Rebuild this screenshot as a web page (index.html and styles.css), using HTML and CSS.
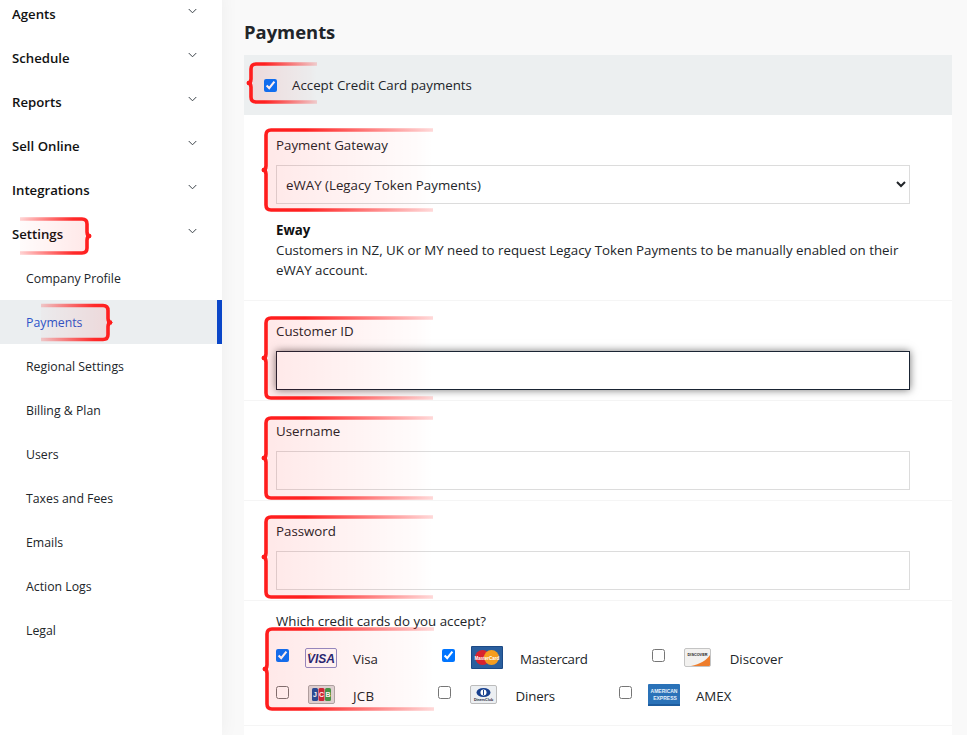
FILE: index.html
```html
<!DOCTYPE html>
<html lang="en">
<head>
<meta charset="utf-8">
<title>Payments</title>
<link rel="stylesheet" href="styles.css">
</head>
<body>
<svg class="defs" width="0" height="0" aria-hidden="true">
  <defs>
    <linearGradient id="sl"><stop offset="0" stop-color="#ff1c1c"/><stop offset=".25" stop-color="#ff2020"/><stop offset="1" stop-color="#ff2a2a" stop-opacity=".18"/></linearGradient>
    <linearGradient id="fl"><stop offset="0" stop-color="#ff0000" stop-opacity=".09"/><stop offset=".9" stop-color="#ff0000" stop-opacity=".015"/><stop offset="1" stop-color="#ff0000" stop-opacity="0"/></linearGradient>
    <linearGradient id="sr"><stop offset="0" stop-color="#ff2a2a" stop-opacity=".2"/><stop offset=".75" stop-color="#ff2a2a"/><stop offset="1" stop-color="#ff1c1c"/></linearGradient>
    <linearGradient id="fr"><stop offset="0" stop-color="#ff0000" stop-opacity=".015"/><stop offset="1" stop-color="#ff0000" stop-opacity=".09"/></linearGradient>
    <symbol id="chev" viewBox="0 0 10 6"><path d="M.8.8 5 5l4.200-4.200" fill="none" stroke="#3a4148" stroke-width="1.100"/></symbol>
    <symbol id="big" viewBox="0 0 172 84">
      <path d="M172 2H10Q5 2 5 7V42H5V77Q5 82 10 82H172Z" fill="url(#fl)"/>
      <path d="M172 2H10Q5 2 5 7V38Q5 42 1 42Q5 42 5 46V77Q5 82 10 82H172" fill="none" stroke="url(#sl)" stroke-width="3.600"/>
      <path d="M6 38 0 42l6 4z" fill="#ff1c1c"/>
    </symbol>
    <symbol id="small" viewBox="0 0 71 42">
      <path d="M71 2H10Q5 2 5 7V35Q5 40 10 40H71Z" fill="url(#fl)"/>
      <path d="M71 2H10Q5 2 5 7V17Q5 21 1 21Q5 21 5 25V35Q5 40 10 40H71" fill="none" stroke="url(#sl)" stroke-width="3.600"/>
      <path d="M6 17 0 21l6 4z" fill="#ff1c1c"/>
    </symbol>
    <symbol id="right" viewBox="0 0 72 38">
      <path d="M0 2H62Q67 2 67 7V31Q67 36 62 36H0Z" fill="url(#fr)"/>
      <path d="M0 2H62Q67 2 67 7V15Q67 19 71 19Q67 19 67 23V31Q67 36 62 36H0" fill="none" stroke="url(#sr)" stroke-width="3.600"/>
      <path d="M66 15 72 19l-6 4z" fill="#ff1c1c"/>
    </symbol>
  </defs>
</svg>
<div class="shell">
  <nav class="sidebar">
    <a class="nav-item">Agents<svg class="chev"><use href="#chev"/></svg></a>
    <a class="nav-item">Schedule<svg class="chev"><use href="#chev"/></svg></a>
    <a class="nav-item">Reports<svg class="chev"><use href="#chev"/></svg></a>
    <a class="nav-item">Sell Online<svg class="chev"><use href="#chev"/></svg></a>
    <a class="nav-item">Integrations<svg class="chev"><use href="#chev"/></svg></a>
    <a class="nav-item">Settings<svg class="chev"><use href="#chev"/></svg><svg class="mark mark-settings"><use href="#right"/></svg></a>
    <a class="sub-item">Company Profile</a>
    <a class="sub-item active">Payments<svg class="mark mark-payments"><use href="#right"/></svg></a>
    <a class="sub-item">Regional Settings</a>
    <a class="sub-item">Billing &amp; Plan</a>
    <a class="sub-item">Users</a>
    <a class="sub-item">Taxes and Fees</a>
    <a class="sub-item">Emails</a>
    <a class="sub-item">Action Logs</a>
    <a class="sub-item">Legal</a>
  </nav>
  <main class="main">
    <h1 class="title">Payments</h1>
    <div class="accept">
      <input type="checkbox" checked>
      <span>Accept Credit Card payments</span>
      <svg class="mark mark-accept"><use href="#small"/></svg>
    </div>
    <section class="row row-gateway">
      <label class="label">Payment Gateway</label>
      <select class="field"><option>eWAY (Legacy Token Payments)</option></select>
      <div class="help">
        <strong>Eway</strong>
        <p>Customers in NZ, UK or MY need to request Legacy Token Payments to be manually enabled on their eWAY account.</p>
      </div>
      <svg class="mark mark-gateway"><use href="#big"/></svg>
    </section>
    <section class="row">
      <label class="label">Customer ID</label>
      <input class="field focused" type="text">
      <svg class="mark mark-customer"><use href="#big"/></svg>
    </section>
    <section class="row">
      <label class="label">Username</label>
      <input class="field" type="text">
      <svg class="mark mark-customer"><use href="#big"/></svg>
    </section>
    <section class="row">
      <label class="label">Password</label>
      <input class="field" type="password">
      <svg class="mark mark-pass"><use href="#big"/></svg>
    </section>
    <section class="row row-cards">
      <label class="label">Which credit cards do you accept?</label>
      <div class="cards">
        <label class="card"><input type="checkbox" checked>
          <svg class="ico" width="32" height="20" viewBox="0 0 32 20"><rect x=".5" y=".5" width="31" height="19" rx="1.500" fill="#fff" stroke="#8f8fc8"/><text x="16" y="14.500" class="t-visa">VISA</text><path d="M3 5q2 0 4 3l-1-3z" fill="#f0a030"/></svg>
          <span>Visa</span></label>
        <label class="card"><input type="checkbox" checked>
          <svg class="ico ico-mc" width="32" height="23" viewBox="0 0 32 23"><rect width="32" height="23" rx="1" fill="#1c4a86"/><rect x="1" y="1" width="30" height="21" fill="#2a5f9e"/><circle cx="11.500" cy="11.500" r="7.500" fill="#d8232f"/><circle cx="20.500" cy="11.500" r="7.500" fill="#f59d1f"/><text x="16" y="13.500" class="t-mc">MasterCard</text></svg>
          <span class="lbl-mc">Mastercard</span></label>
        <label class="card"><input type="checkbox">
          <svg class="ico ico-disc" width="27" height="19" viewBox="0 0 27 19"><rect x=".5" y=".5" width="26" height="18" rx="1.500" fill="#f2f1ef" stroke="#c4c4c4"/><path d="M7 18C16 16 23 12 26 7V17q0 1-1 1z" fill="#ee7d2c"/><text x="13.500" y="8" class="t-disc">DISCOVER</text></svg>
          <span>Discover</span></label>
      </div>
      <div class="cards cards-2">
        <label class="card"><input type="checkbox">
          <svg class="ico ico-jcb" width="27" height="19" viewBox="0 0 27 19"><rect x=".5" y=".5" width="26" height="18" rx="1.500" fill="#dcdcdc" stroke="#aaa"/><rect x="4" y="3" width="6" height="13" rx="1.500" fill="#1d4f9c"/><rect x="10.500" y="3" width="6" height="13" rx="1.500" fill="#c9283a"/><rect x="17" y="3" width="6" height="13" rx="1.500" fill="#3c9a4a"/><text x="7" y="12" class="t-jcb">J</text><text x="13.500" y="12" class="t-jcb">C</text><text x="20" y="12" class="t-jcb">B</text></svg>
          <span class="lbl-jcb">JCB</span></label>
        <label class="card"><input type="checkbox">
          <svg class="ico ico-din" width="27" height="19" viewBox="0 0 27 19"><rect x=".5" y=".5" width="26" height="18" rx="1.500" fill="#eceff2" stroke="#bcbcbc"/><ellipse cx="13.500" cy="7.500" rx="7" ry="4.500" fill="#17408f"/><circle cx="13.500" cy="7.500" r="3" fill="#fff"/><rect x="13" y="5" width="1" height="5" fill="#17408f"/><text x="13.500" y="16" class="t-din">DinersClub</text></svg>
          <span class="lbl-din">Diners</span></label>
        <label class="card"><input type="checkbox">
          <svg class="ico" width="32" height="22" viewBox="0 0 32 22"><rect width="32" height="22" rx="1" fill="#2a72b8"/><rect y="20" width="32" height="2" fill="#1d5c9e"/><text x="16" y="9" class="t-amex">AMERICAN</text><text x="17" y="15.500" class="t-amex">EXPRESS</text></svg>
          <span>AMEX</span></label>
      </div>
      <svg class="mark mark-cards"><use href="#big"/></svg>
    </section>
    <div class="panel-rest"></div>
  </main>
</div>
</body>
</html>
```
FILE: styles.css
```css
* { box-sizing: border-box; }
html, body { margin: 0; height: 735px; overflow: hidden; }
body {
  background: #f9f9f9;
  color: #212529;
  font-family: "Open Sans", "Noto Sans", "Liberation Sans", sans-serif;
  font-size: 13.3px;
}
.defs { position: absolute; }
.shell { display: flex; margin-top: -8px; height: 743px; }
.sidebar {
  position: relative;
  width: 222px;
  flex: none;
  background: #fff;
  box-shadow: 0 0 18px rgba(0, 0, 0, .05);
}
.nav-item, .sub-item {
  position: relative;
  display: flex;
  align-items: center;
  height: 44px;
  color: #111;
}
.nav-item { padding-left: 12px; font-weight: 600; font-size: 13.2px; }
.sub-item { padding-left: 26px; font-size: 12.3px; color: #212529; }
.sub-item.active {
  background: #ebeef0;
  color: #2b55c9;
  border-right: 5px solid #0a46c8;
}
.chev { position: absolute; left: 188px; top: 16px; width: 9px; height: 6px; }
.mark { position: absolute; pointer-events: none; overflow: visible; }
.mark-settings { left: 20px; top: 5px; width: 72px; height: 38px; }
.mark-payments { left: 41px; top: 3px; width: 72px; height: 39px; }
.main { flex: 1; padding: 0 15px 0 22px; }
.title {
  margin: 0;
  height: 63px;
  padding-top: 26px;
  font-size: 18.400px;
  line-height: 28px;
  font-weight: 700;
  color: #212529;
}
.accept {
  position: relative;
  display: flex;
  align-items: center;
  gap: 15px;
  height: 60px;
  padding-left: 20px;
  background: #ecefF0;
}
.accept input { margin: 0; width: 13px; height: 13px; }
.mark-accept { left: 2px; top: 7px; width: 71px; height: 42px; }
.row {
  position: relative;
  height: 100px;
  padding: 20px 42px 0 32px;
  background: #fff;
  border-bottom: 1px solid #f5f5f5;
}
.row-gateway { height: 186px; }
.row-cards { height: 125px; padding-top: 10px; }
.panel-rest { height: 20px; background: #fff; }
.label { display: block; height: 21px; line-height: 21px; margin-bottom: 9px; }
.row-cards > .label { margin-bottom: 0; }
.field {
  display: block;
  width: 100%;
  height: 39px;
  padding: 0 9px;
  border: 1px solid #dcdcdc;
  border-radius: 0;
  background: transparent;
  color: #212529;
  font: inherit;
}
select.field { background: #fff; padding-left: 5px; }
.focused {
  background: #fff;
  border: 1.500px solid #1a2433;
  box-shadow: 0 0 8px rgba(0, 0, 0, .55);
  outline: none;
}
.help { margin-top: 16px; line-height: 20px; }
.help strong { display: block; font-weight: 700; color: #111; }
.help p { margin: 0; }
.mark-gateway { left: 17px; top: 13px; width: 172px; height: 84px; }
.mark-customer { left: 17px; top: 15px; width: 172px; height: 84px; }
.mark-pass { left: 17px; top: 14px; width: 172px; height: 84px; }
.mark-cards { left: 18px; top: 26px; width: 172px; height: 84px; }
.cards { display: flex; gap: 64px; margin-top: 14px; }
.cards-2 { margin-top: 14px; }
.card { display: flex; align-items: center; height: 23px; }
.card input { margin: 0 16px 4px 0; width: 13px; height: 13px; flex: none; }
.ico { flex: none; margin-right: 16px; }
.ico-mc { margin-right: 17px; }
.ico-disc { margin: 0 19px 0 3px; }
.ico-jcb { margin: 0 18px 0 3px; }
.ico-din { margin: 0 18px 0 3px; }
.card span { padding-top: 3px; }
.card .lbl-mc { letter-spacing: -.3px; }
.card .lbl-jcb { letter-spacing: .3px; }
.card .lbl-din { letter-spacing: -.15px; }
.t-visa { font: italic 800 12px "Liberation Sans", sans-serif; fill: #1a2a78; text-anchor: middle; }
.t-mc { font: 700 4.500px "Liberation Sans", sans-serif; fill: #fff; text-anchor: middle; }
.t-disc { font: 700 3.800px "Liberation Sans", sans-serif; fill: #222; text-anchor: middle; }
.t-jcb { font: 700 7px "Liberation Sans", sans-serif; fill: #fff; text-anchor: middle; }
.t-din { font: 700 3.600px "Liberation Sans", sans-serif; fill: #223; text-anchor: middle; }
.t-amex { font: 700 5px "Liberation Sans", sans-serif; fill: #e4f0fb; text-anchor: middle; }
```
